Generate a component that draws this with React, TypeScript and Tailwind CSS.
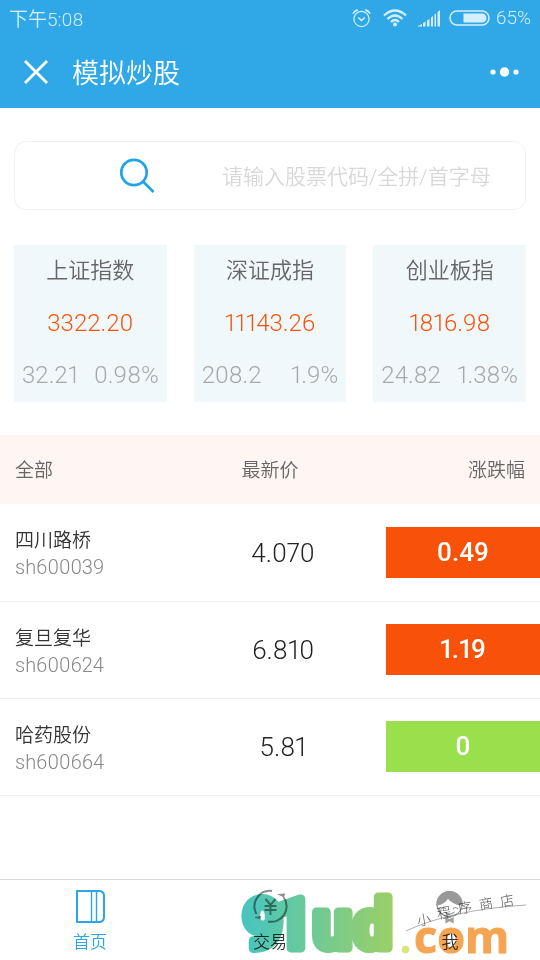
import React from "react";

type IndexQuote = { name: string; value: string; change: string; percent: string };
type Stock = { name: string; code: string; price: string; change: string; up: boolean };

const indices: IndexQuote[] = [
  { name: "上证指数", value: "3322.20", change: "32.21", percent: "0.98%" },
  { name: "深证成指", value: "11143.26", change: "208.2", percent: "1.9%" },
  { name: "创业板指", value: "1816.98", change: "24.82", percent: "1.38%" },
];

const stocks: Stock[] = [
  { name: "四川路桥", code: "sh600039", price: "4.070", change: "0.49", up: true },
  { name: "复旦复华", code: "sh600624", price: "6.810", change: "1.19", up: true },
  { name: "哈药股份", code: "sh600664", price: "5.81", change: "0", up: false },
];

function StatusBar() {
  return (
    <div className="flex h-9 items-center justify-between px-[9px] text-[19px] text-[#d5eefb]">
      <span className="pt-1">下午5:08</span>
      <div className="flex items-center">
        <svg className="mr-3" width="19" height="20" viewBox="0 0 20 20" fill="none" stroke="currentColor" strokeWidth="1.3">
          <circle cx="10" cy="11" r="8" />
          <path d="M6.5 9.5 10 12.5 13.5 9.5" strokeWidth="1.6" />
          <path d="M1 5.5Q2.5 2.5 6 1.5M19 5.5Q17.500 2.5 14 1.500" strokeWidth="1.8" />
        </svg>
        <svg className="mr-[10px]" width="24" height="18" viewBox="0 0 24 18" fill="none" stroke="currentColor" strokeWidth="2.2">
          <path d="M1 6.500Q12-3.500 23 6.500M4.500 10Q12 3 19.500 10M8 13Q12 9 16 13" />
          <circle cx="12" cy="15.500" r="2" fill="currentColor" stroke="none" />
        </svg>
        <svg className="mr-[9px]" width="23" height="17" viewBox="0 0 23 17" fill="currentColor">
          <path d="M0 16.500 5 14V16.500ZM6 13 8.500 11.500V16.500H6ZM10 10.500 12.500 9V16.500H10ZM14 7.500 16 6V16.500H14ZM17.500 4.500 19 3.500V16.500H17.500ZM20.500 2 23 0V16.500H20.500Z" />
        </svg>
        <svg className="mr-[6px]" width="41" height="16" viewBox="0 0 41 16" fill="none">
          <rect x="1" y="1" width="39" height="14" rx="7" stroke="currentColor" strokeWidth="1.500" />
          <path d="M14.500 3.500H33A4.500 4.500 0 0 1 33 12.500H14.500Z" fill="currentColor" />
        </svg>
        <span>65%</span>
      </div>
    </div>
  );
}

function TitleBar() {
  return (
    <div className="flex h-[72px] items-center px-5 text-white">
      <button type="button" aria-label="关闭" className="mr-5 flex size-8 items-center justify-center">
        <svg width="24" height="24" viewBox="0 0 24 24" stroke="currentColor" strokeWidth="2.800">
          <path d="M1 1 23 23M23 1 1 23" />
        </svg>
      </button>
      <h1 className="pt-1 text-[27px] leading-8">模拟炒股</h1>
      <button type="button" aria-label="更多" className="ml-auto flex h-8 items-center">
        <svg width="30" height="10" viewBox="0 0 30 10" fill="currentColor">
          <circle cx="3" cy="5" r="2.600" />
          <circle cx="14.500" cy="5" r="4.700" />
          <circle cx="26" cy="5" r="2.600" />
        </svg>
      </button>
    </div>
  );
}

function SearchBox() {
  return (
    <label className="mx-[14px] mt-[33px] flex h-[69px] items-center rounded-xl border border-[#f1f1f1]">
      <svg className="ml-[104px] shrink-0" width="36" height="36" viewBox="0 0 36 36" fill="none" stroke="#22a3e8" strokeWidth="2.700">
        <circle cx="15" cy="14.500" r="12.700" />
        <path d="M24 23.500 34.500 34" />
      </svg>
      <input
        type="text"
        aria-label="搜索股票"
        placeholder="请输入股票代码/全拼/首字母"
        className="ml-[67px] min-w-0 flex-1 bg-transparent pt-1 text-[21px] outline-none placeholder:text-[#d8d8d8]"
      />
    </label>
  );
}

function IndexCards() {
  return (
    <section className="mx-[14px] mt-[35px] grid grid-cols-3 gap-[27px]">
      {indices.map((q) => (
        <article key={q.name} className="flex h-[157px] flex-col justify-between bg-[#f0f8fc] px-2 pt-[10px] pb-[11px] text-center leading-8">
          <h2 className="text-[22px] text-[#666]">{q.name}</h2>
          <p className="text-[24px] text-[#f9540b]">{q.value}</p>
          <p className="flex justify-between text-[24px] text-[#a8a8a8]">
            <span>{q.change}</span>
            <span>{q.percent}</span>
          </p>
        </article>
      ))}
    </section>
  );
}

function StockTable() {
  return (
    <table className="mt-[33px] w-full table-fixed border-collapse">
      <thead>
        <tr className="h-[69px] bg-[#fff5f3] text-[19px] text-[#666]">
          <th scope="col" className="pt-1 pl-[15px] text-left font-[350]">全部</th>
          <th scope="col" className="pt-1 text-center font-[350]">最新价</th>
          <th scope="col" className="pt-1 pr-[15px] text-right font-[350]">涨跌幅</th>
        </tr>
      </thead>
      <tbody>
        {stocks.map((s) => (
          <tr key={s.code} className="h-[97px] border-b border-[#eee]">
            <td className="pt-[2px] pl-[15px]">
              <div className="text-[19px] leading-7 text-[#333]">{s.name}</div>
              <div className="text-[20px] leading-6 text-[#888]">{s.code}</div>
            </td>
            <td className="pt-[2px] pl-[26px] text-center text-[26px] text-[#222]">{s.price}</td>
            <td className="pl-[26px]">
              <div className={`flex h-[51px] items-center justify-center text-[26px] font-medium text-white ${s.up ? "bg-[#f8520a]" : "bg-[#99e04c]"}`}>
                {s.change}
              </div>
            </td>
          </tr>
        ))}
      </tbody>
    </table>
  );
}

function HomeIcon() {
  return (
    <svg width="36" height="36" viewBox="0 0 36 36" fill="none" stroke="#2ba5e3" strokeWidth="2">
      <path d="M5 3H28Q32 4 32 8V29Q32 33 28 34H5Z" strokeLinejoin="round" />
      <path d="M19.500 3V34M24.500 3V34" strokeWidth="1.400" />
    </svg>
  );
}

function TradeIcon() {
  return (
    <svg width="36" height="36" viewBox="0 0 36 36" fill="none" stroke="#8c8c8c" strokeWidth="2">
      <path d="M4.500 26A15.500 15.500 0 0 1 20 3M31.500 9A15.500 15.500 0 0 1 16 33.500" />
      <path d="M3 29.500 9 28.500 7 31M26 6.500 33 6 31 9" fill="#8c8c8c" strokeWidth="1" />
      <path d="M13.500 11 18.500 17 23.500 11M12.500 18H24.500M12.500 22H24.500M18.500 17V27" />
    </svg>
  );
}

function ProfileIcon() {
  return (
    <svg width="36" height="36" viewBox="0 0 36 36" fill="none" stroke="#999" strokeWidth="1.200">
      <circle cx="17.500" cy="16" r="12.500" />
      <path d="M5 17A12.500 13.500 0 0 1 30 17Q21 16 16 10 12 16 5 17Z" fill="#999" />
      <path d="M9 21Q11.500 18 14 21M21 21Q23.500 18 26 21M12.500 24Q17.500 28 22.500 24" />
      <path d="M14 30 17.500 32 21 30V34.500L17.500 32.500 14 34.500Z" fill="#aaa" />
    </svg>
  );
}

function Watermark() {
  return (
    <svg aria-hidden="true" className="pointer-events-none absolute right-0 bottom-0 mix-blend-multiply" width="300" height="80" viewBox="240 880 300 80">
      <defs>
        <linearGradient id="brand" gradientUnits="userSpaceOnUse" x1="243" y1="0" x2="393" y2="0">
          <stop offset="0" stopColor="#47c5bf" />
          <stop offset="1" stopColor="#9bcf67" />
        </linearGradient>
      </defs>
      <text
        x="243 276 313 353"
        y="948"
        fontFamily="Roboto, sans-serif"
        fontWeight="700"
        fontSize="69"
        fill="url(#brand)"
        stroke="url(#brand)"
        strokeWidth="9"
        strokeLinejoin="round"
      >
        91ud
      </text>
      <circle cx="405.500" cy="949.500" r="3.800" fill="#d9e778" />
      <text x="414" y="953" fontFamily="'Open Sans', sans-serif" fontWeight="700" fontSize="45" fill="#f5a552" stroke="#f5a552" strokeWidth="1">com</text>
      <path d="M406 931Q450 910 526 905" fill="none" stroke="#999" strokeWidth="0.800" />
      <text x="418 438 459 480 501" y="926 919 914 910 907" rotate="-10" fontFamily="'Noto Sans CJK SC', sans-serif" fontWeight="300" fontSize="14" fill="#555">小程序商店</text>
    </svg>
  );
}

function TabBar() {
  return (
    <nav className="relative mt-auto grid h-[81px] grid-cols-3 border-t border-[#d8d8d8] bg-white text-[17px] leading-6 text-[#333]">
      <a href="#home" className="flex flex-col items-center pt-2 text-[#2ba5e3]">
        <HomeIcon />
        <span className="mt-[6px]">首页</span>
      </a>
      <a href="#trade" className="flex flex-col items-center pt-2">
        <TradeIcon />
        <span className="mt-[6px]">交易</span>
      </a>
      <a href="#me" className="flex flex-col items-center pt-2">
        <ProfileIcon />
        <span className="mt-[6px]">我</span>
      </a>
      <Watermark />
    </nav>
  );
}

export default function App() {
  return (
    <div className="flex min-h-screen flex-col bg-white font-['Roboto','Noto_Sans_CJK_SC',sans-serif] font-[350] proportional-nums">
      <header className="bg-[#30a8e8]">
        <StatusBar />
        <TitleBar />
      </header>
      <main>
        <SearchBox />
        <IndexCards />
        <StockTable />
      </main>
      <TabBar />
    </div>
  );
}
